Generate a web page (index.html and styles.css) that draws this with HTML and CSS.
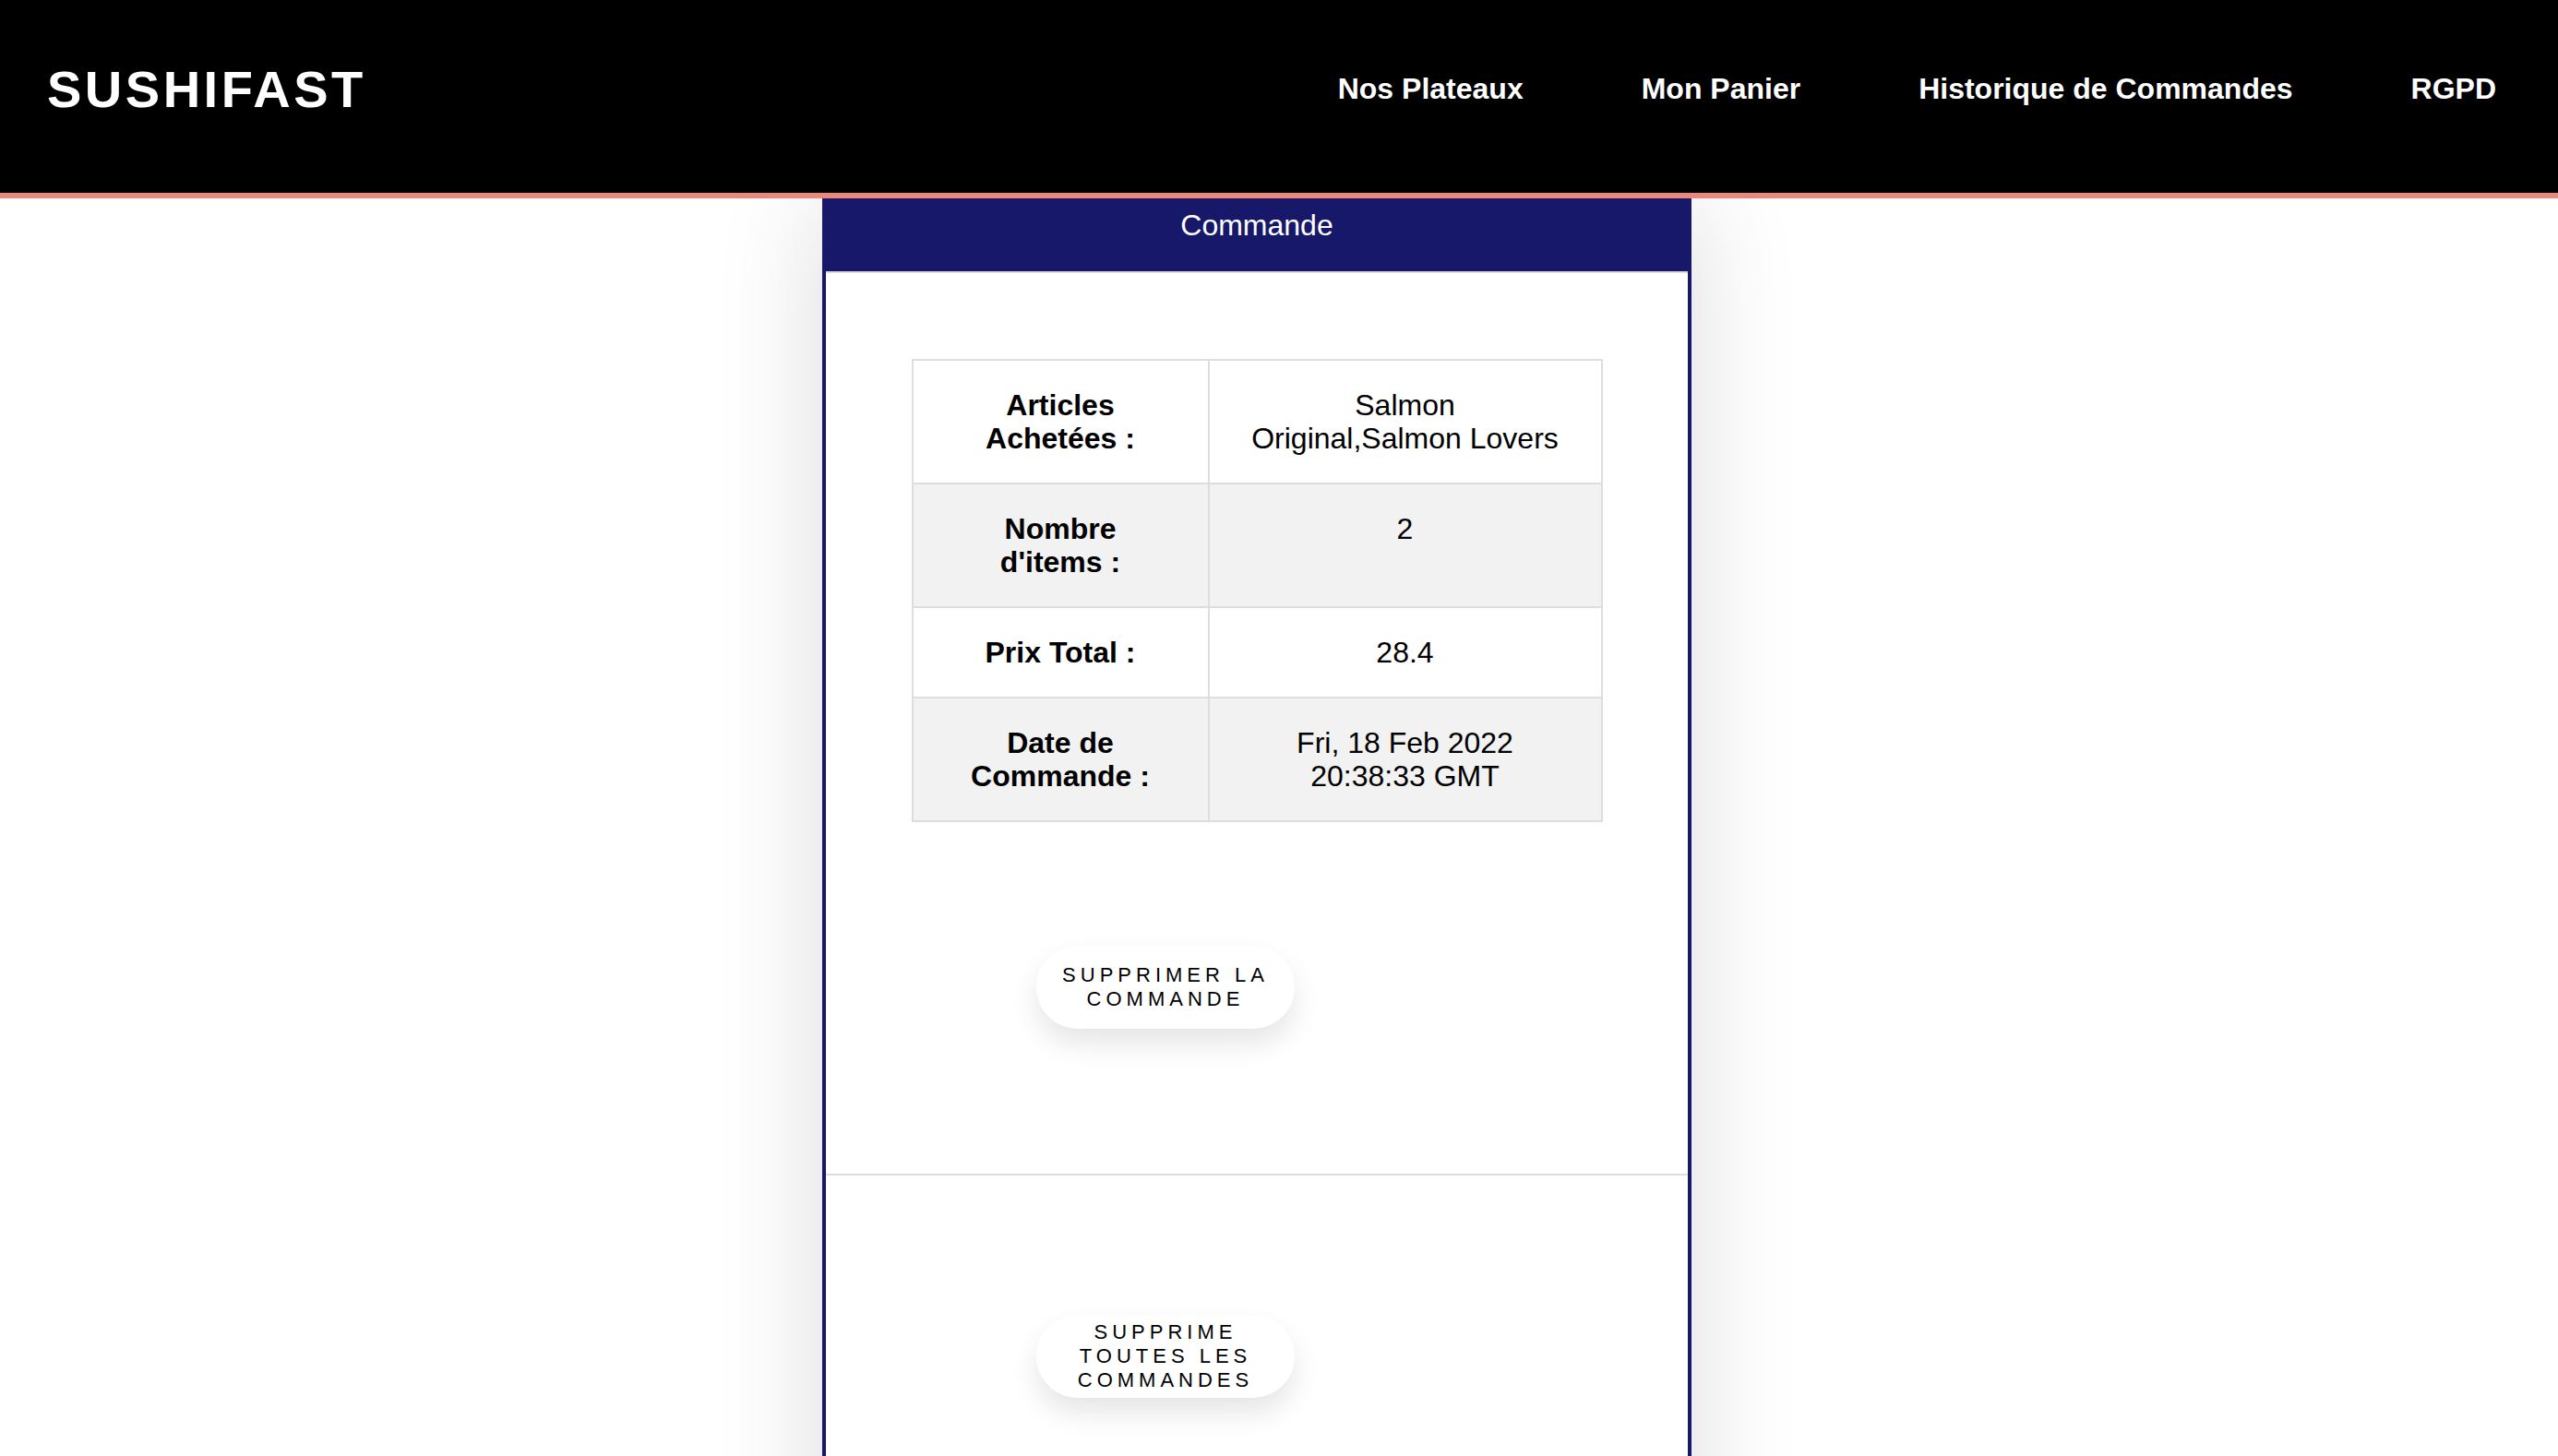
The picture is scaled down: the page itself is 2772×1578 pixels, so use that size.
FILE: index.html
```html
<!DOCTYPE html>
<html lang="fr">
<head>
<meta charset="utf-8">
<title>SushiFast - Commande</title>
<link rel="stylesheet" href="styles.css">
</head>
<body>
<header class="topbar">
  <div class="logo">SUSHIFAST</div>
  <nav class="nav">
    <a class="nav-link" href="#">Nos Plateaux</a>
    <a class="nav-link" href="#">Mon Panier</a>
    <a class="nav-link" href="#">Historique de Commandes</a>
    <a class="nav-link" href="#">RGPD</a>
  </nav>
</header>
<main class="page">
  <section class="card">
    <div class="card-title">Commande</div>
    <div class="order">
      <table class="order-table">
        <colgroup><col class="col-label"><col class="col-value"></colgroup>
        <tbody>
          <tr><th>Articles Achetées :</th><td>Salmon Original,Salmon Lovers</td></tr>
          <tr class="alt"><th>Nombre d'items :</th><td>2</td></tr>
          <tr><th>Prix Total :</th><td>28.4</td></tr>
          <tr class="alt"><th>Date de Commande :</th><td>Fri, 18 Feb 2022 20:38:33 GMT</td></tr>
        </tbody>
      </table>
      <div class="actions">
        <button class="btn">Supprimer la commande</button>
      </div>
    </div>
    <div class="footer-actions">
      <button class="btn">Supprime toutes les commandes</button>
    </div>
  </section>
</main>
</body>
</html>
```
FILE: styles.css
```css
* { box-sizing: border-box; }
html, body { margin: 0; padding: 0; background: #fff; }
body { font-family: "Liberation Sans", Arial, sans-serif; color: #000; }

.topbar {
  position: relative;
  z-index: 2;
  height: 215px;
  background: #000;
  border-bottom: 6px solid #ec877a;
  display: flex;
  align-items: center;
  justify-content: space-between;
  padding: 0 67px 17px 51px;
}
.logo {
  color: #fff;
  font-weight: 700;
  font-size: 56px;
  letter-spacing: 3.5px;
}
.nav { display: flex; gap: 128px; }
.nav-link {
  color: #fff;
  text-decoration: none;
  font-weight: 700;
  font-size: 32px;
}

.page {
  display: flex;
  justify-content: center;
  padding-right: 48px;
}
.card {
  width: 942px;
  border: 4px solid #18186a;
  border-top: 0;
  background: #fff;
  box-shadow: 0 0 110px rgba(0, 0, 0, 0.14);
}
.card-title {
  background: #18186a;
  color: #fff;
  text-align: center;
  font-size: 32px;
  padding: 11px 0 31px;
  border-bottom: 2px solid #dcdcdc;
}
.order {
  padding-top: 93px;
  padding-bottom: 157px;
  border-bottom: 2px solid #dedede;
}
.order-table {
  width: 747px;
  margin: 0 auto;
  border-collapse: collapse;
  table-layout: fixed;
  font-size: 32px;
  line-height: 36px;
}
.col-label { width: 321px; }
.col-value { width: 426px; }
.order-table th,
.order-table td {
  border: 2px solid #dedede;
  text-align: center;
  vertical-align: top;
}
.order-table th { font-weight: 700; padding: 30px 48px; }
.order-table td { font-weight: 400; padding: 30px 44px; }
.order-table tr.alt { background: #f2f2f2; }

.actions { padding: 134px 0 0 228px; }
.footer-actions { padding: 151px 0 200px 228px; }

.btn {
  width: 280px;
  height: 90px;
  border: none;
  border-radius: 45px;
  background: #fff;
  color: #000;
  font-family: "Liberation Sans", Arial, sans-serif;
  font-size: 22px;
  font-weight: 500;
  letter-spacing: 5px;
  text-transform: uppercase;
  padding: 2px 12px;
  box-shadow: 0 16px 30px rgba(0, 0, 0, 0.1);
  cursor: pointer;
}
```
